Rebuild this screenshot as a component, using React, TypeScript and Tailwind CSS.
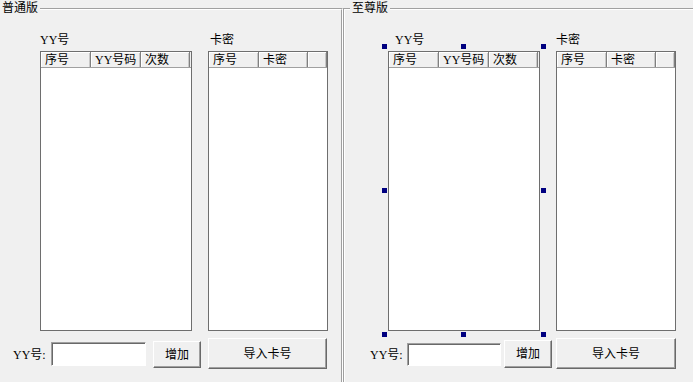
import React from "react";

type Col = { label: string; w: number };

const font = "font-['Liberation_Serif','Noto_Sans_CJK_SC',serif] text-[12px] leading-[14px] text-black";

function ListView({ width, cols }: { width: number; cols: Col[] }) {
  return (
    <div
      className="h-[280px] border border-[#6e6e6e] bg-white flex flex-col"
      style={{ width }}
    >
      <div className="flex h-[16px] bg-[#f0f0f0] border-b border-[#a0a0a0]">
        {cols.map((c, i) => (
          <div
            key={i}
            className="h-full border-r border-[#808080] shadow-[inset_1px_1px_0_#ffffff,inset_-1px_0_0_#c8c8c8] pl-[4px] pt-[1px] whitespace-nowrap overflow-hidden"
            style={{ width: c.w }}
          >
            {c.label}
          </div>
        ))}
      </div>
      <div className="flex-1 bg-white" />
    </div>
  );
}

function Button({ w, h, children }: { w: number; h: number; children: React.ReactNode }) {
  return (
    <div
      className="flex items-center justify-center bg-[#f0f0f0] border border-t-white border-l-white border-r-[#696969] border-b-[#696969] shadow-[inset_-1px_-1px_0_#a0a0a0]"
      style={{ width: w, height: h }}
    >
      {children}
    </div>
  );
}

function Input({ w, h }: { w: number; h: number }) {
  return (
    <div
      className="bg-white border border-t-[#a0a0a0] border-l-[#a0a0a0] border-r-white border-b-white shadow-[inset_1px_1px_0_#696969]"
      style={{ width: w, height: h }}
    />
  );
}

function Handle({ className }: { className: string }) {
  return <div className={`absolute w-[5px] h-[5px] bg-[#000080] ${className}`} />;
}

const yyCols: Col[] = [
  { label: "序号", w: 50 },
  { label: "YY号码", w: 50 },
  { label: "次数", w: 49 },
];
const kmCols: Col[] = [
  { label: "序号", w: 50 },
  { label: "卡密", w: 49 },
  { label: "", w: 19 },
];

export default function App() {
  return (
    <div className={`w-[693px] h-[382px] bg-[#f0f0f0] overflow-hidden flex ${font}`}>
      {/* 普通版 */}
      <div className="relative w-[343px] h-full pt-[8px] shrink-0">
        <div className="absolute left-0 top-[1px] px-[2px] bg-[#f0f0f0]">普通版</div>
        <div className="h-full border-t border-r border-t-[#a0a0a0] border-r-white">
          <div className="h-full border-t border-r border-t-white border-r-[#a0a0a0]">
            <div className="flex pl-[40px] pt-[23px]">
              <div className="flex flex-col">
                <div className="h-[14px] mb-[4px]">YY号</div>
                <ListView width={152} cols={yyCols} />
              </div>
              <div className="flex flex-col ml-[16px]">
                <div className="h-[14px] mb-[4px] pl-[2px]">卡密</div>
                <ListView width={120} cols={kmCols} />
              </div>
            </div>
            <div className="flex items-start pl-[13px] mt-[7px]">
              <div className="w-[38px] mt-[10px]">YY号:</div>
              <div className="mt-[4px]">
                <Input w={95} h={24} />
              </div>
              <div className="ml-[7px] mt-[3px]">
                <Button w={48} h={27}>增加</Button>
              </div>
              <div className="ml-[7px]">
                <Button w={119} h={31}>导入卡号</Button>
              </div>
            </div>
          </div>
        </div>
      </div>

      {/* 至尊版 */}
      <div className="relative flex-1 h-full pt-[8px]">
        <div className="absolute left-[7px] top-[1px] px-[2px] bg-[#f0f0f0]">至尊版</div>
        <div className="h-full border-t border-l border-[#a0a0a0]">
          <div className="h-full border-t border-l border-white">
            <div className="flex pl-[43px] pt-[23px]">
              <div className="flex flex-col">
                <div className="h-[14px] mb-[4px] pl-[7px]">YY号</div>
                <div className="relative">
                  <ListView width={152} cols={yyCols} />
                  <Handle className="left-[-6px] top-[-7px]" />
                  <Handle className="left-[73px] top-[-7px]" />
                  <Handle className="left-[153px] top-[-7px]" />
                  <Handle className="left-[-6px] top-[137px]" />
                  <Handle className="left-[153px] top-[137px]" />
                  <Handle className="left-[-6px] top-[281px]" />
                  <Handle className="left-[73px] top-[281px]" />
                  <Handle className="left-[153px] top-[281px]" />
                </div>
              </div>
              <div className="flex flex-col ml-[16px]">
                <div className="h-[14px] mb-[4px]">卡密</div>
                <ListView width={120} cols={kmCols} />
              </div>
            </div>
            <div className="flex items-start pl-[25px] mt-[7px]">
              <div className="w-[37px] mt-[10px]">YY号:</div>
              <div className="mt-[5px]">
                <Input w={94} h={23} />
              </div>
              <div className="ml-[3px] mt-[2px]">
                <Button w={48} h={28}>增加</Button>
              </div>
              <div className="ml-[4px]">
                <Button w={120} h={31}>导入卡号</Button>
              </div>
            </div>
          </div>
        </div>
      </div>
    </div>
  );
}
